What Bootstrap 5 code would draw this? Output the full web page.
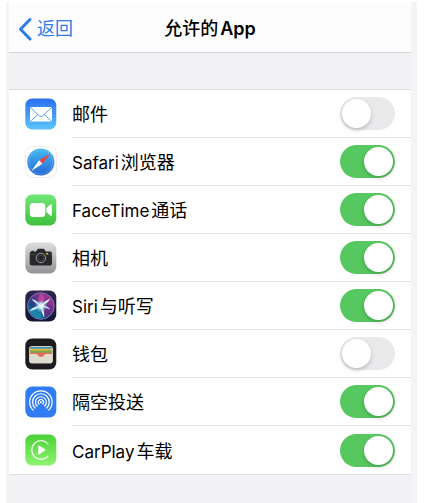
<!DOCTYPE html>
<html lang="zh-CN">
<head>
<meta charset="utf-8">
<meta name="viewport" content="width=device-width, initial-scale=1">
<title>允许的App</title>
<link href="https://cdn.jsdelivr.net/npm/bootstrap@5.3.0/dist/css/bootstrap.min.css" rel="stylesheet">
<style>
  body { font-family: Inter, "Noto Sans CJK SC", sans-serif; font-size: 18px; line-height: 24px; color: #000; background: #fff; }
  .page-wrap { padding: 2px 30px 0 6px; }
  .phone { background: #f2f1f6; border: solid #f4f4f4; border-width: 0 6px 0 3px; }
  .top-bar { display: grid; grid-template-columns: 1fr auto 1fr; height: 51px; padding: 4px 9px 0; background: #fdfdfe; border-bottom: 1px solid #d5d5d8; }
  .back-link { color: #2e7bee; }
  .page-title { font-size: 18px; line-height: 24px; font-weight: 600; }
  .page-title .han { font-weight: 500; margin-right: 2px; }
  .settings { margin-top: 36px; background: #fff; border: solid #dcdce1; border-width: 1px 0; }
  .setting { padding-left: 16px; gap: 15px; }
  .setting-body { min-height: 48px; padding-right: 16px; border-bottom: 1px solid #e2e2e4; }
  .setting-body label { padding-top: 3px; }
  .setting:last-child .setting-body { border-bottom: 0; }
  .app-icon { width: 32px; height: 32px; }
  .latin { font-size: 17px; margin-right: 2px; }
  .form-check-input.toggle { width: 55px; height: 33px; margin: 0; padding: 0 2px; border: 0; border-radius: 17px; background: #e9e9eb; display: flex; align-items: center; cursor: pointer; }
  .form-check-input.toggle::before { content: ""; width: 29px; height: 29px; border-radius: 50%; background: #fff; box-shadow: 0 2px 4px rgba(0,0,0,.2); }
  .form-check-input.toggle:checked { background: #57c75f; justify-content: flex-end; }
</style>
<script src="https://cdn.jsdelivr.net/npm/bootstrap@5.3.0/dist/js/bootstrap.bundle.min.js" defer></script>
</head>
<body>
<div class="page-wrap min-vh-100 d-flex flex-column">
<main class="phone flex-grow-1">
  <header class="top-bar align-items-center">
    <a class="back-link d-flex align-items-center text-decoration-none" href="#">
      <svg width="19" height="24" viewBox="0 0 19 24" fill="none" stroke="currentColor" stroke-width="3" stroke-linecap="round" stroke-linejoin="round" aria-hidden="true"><path d="M12 2.500 2.500 12.200 12 22"/></svg>
      <span>返回</span>
    </a>
    <h1 class="page-title m-0"><span class="han">允许的</span>App</h1>
  </header>

  <ul class="settings list-unstyled mb-0">
    <li class="setting d-flex align-items-center">
      <svg class="app-icon flex-shrink-0" viewBox="0 0 32 32" aria-hidden="true">
        <defs><linearGradient id="gMail" x2="0" y2="1"><stop stop-color="#2a6ff0"/><stop offset="1" stop-color="#5cc5fa"/></linearGradient></defs>
        <rect width="31" height="31" y=".5" x=".3" rx="7" fill="url(#gMail)"/>
        <rect x="5" y="9" width="22" height="14.500" rx="1.600" fill="#fff"/>
        <path d="M5.600 9.600l8.800 8.300q1.600 1.300 3.200 0l8.800-8.300M5.800 23l7-6.500M26.200 23l-7-6.500" fill="none" stroke="#5a9fe6" stroke-width="1"/>
      </svg>
      <div class="setting-body flex-grow-1 d-flex align-items-center justify-content-between">
        <label for="mail">邮件</label>
        <input class="form-check-input toggle" type="checkbox" role="switch" id="mail">
      </div>
    </li>
    <li class="setting d-flex align-items-center">
      <svg class="app-icon flex-shrink-0" viewBox="0 0 32 32" aria-hidden="true">
        <defs><linearGradient id="gSafari" x2="0" y2="1"><stop stop-color="#43bdf3"/><stop offset="1" stop-color="#2866d8"/></linearGradient></defs>
        <rect x=".5" y=".5" width="31" height="31" rx="7" fill="#fff" stroke="#ededed"/>
        <circle cx="15.800" cy="16" r="13.600" fill="url(#gSafari)"/>
        <circle cx="15.800" cy="16" r="11.800" fill="none" stroke="#a8dcf8" stroke-width="1" stroke-dasharray=".6 1.500"/>
        <path d="M25.500 7.500 14.200 14.200l3.200 3.600z" fill="#ee4440"/>
        <path d="M6.500 24.800 14.200 14.200l3.200 3.600z" fill="#fff"/>
      </svg>
      <div class="setting-body flex-grow-1 d-flex align-items-center justify-content-between">
        <label for="safari"><span class="latin">Safari</span>浏览器</label>
        <input class="form-check-input toggle" type="checkbox" role="switch" id="safari" checked>
      </div>
    </li>
    <li class="setting d-flex align-items-center">
      <svg class="app-icon flex-shrink-0" viewBox="0 0 32 32" aria-hidden="true">
        <defs><linearGradient id="gFace" x2="0" y2="1"><stop stop-color="#72e67a"/><stop offset="1" stop-color="#3fc13d"/></linearGradient></defs>
        <rect x=".3" y=".5" width="31" height="31" rx="7" fill="url(#gFace)"/>
        <rect x="4.800" y="9" width="15.500" height="14" rx="3.500" fill="#fff"/>
        <path d="M21.300 14.200 25.500 10.300q1.300-1 1.300.6v10.200q0 1.600-1.300.6l-4.200-3.900z" fill="#fff"/>
      </svg>
      <div class="setting-body flex-grow-1 d-flex align-items-center justify-content-between">
        <label for="facetime"><span class="latin">FaceTime</span>通话</label>
        <input class="form-check-input toggle" type="checkbox" role="switch" id="facetime" checked>
      </div>
    </li>
    <li class="setting d-flex align-items-center">
      <svg class="app-icon flex-shrink-0" viewBox="0 0 32 32" aria-hidden="true">
        <defs><linearGradient id="gCam" x2="0" y2="1"><stop stop-color="#dededf"/><stop offset="1" stop-color="#929296"/></linearGradient></defs>
        <rect x=".3" y=".5" width="31" height="31" rx="7" fill="url(#gCam)"/>
        <path d="M6.500 9.500V8.800h2.300v.7h1.700q.8 0 1.200-.9l.6-1.100q.4-.8 1.200-.8h4.800q.8 0 1.200.8l.6 1.100q.4.900 1.200.9h3.700q2 0 2 2v10q0 2-2 2H6.700q-2 0-2-2v-10q0-1.900 1.800-2z" fill="#29292b"/>
        <path d="M4.700 12.500h6M21 12.500h6" stroke="#505053" stroke-width=".7"/>
        <circle cx="15.900" cy="16" r="5.900" fill="#29292b"/>
        <circle cx="15.900" cy="16" r="4.700" fill="#222224" stroke="#bdbdc0" stroke-width=".8"/>
        <circle cx="15.900" cy="16" r="2.700" fill="none" stroke="#55555a" stroke-width=".7"/>
        <circle cx="22" cy="11.700" r=".9" fill="#f8c837"/>
      </svg>
      <div class="setting-body flex-grow-1 d-flex align-items-center justify-content-between">
        <label for="camera">相机</label>
        <input class="form-check-input toggle" type="checkbox" role="switch" id="camera" checked>
      </div>
    </li>
    <li class="setting d-flex align-items-center">
      <svg class="app-icon flex-shrink-0" viewBox="0 0 32 32" aria-hidden="true">
        <defs>
          <linearGradient id="gSiri" x2="0" y2="1"><stop stop-color="#30254f"/><stop offset="1" stop-color="#121638"/></linearGradient>
          <linearGradient id="gOrb" x1="1" y1="0" x2="0" y2="1"><stop stop-color="#b8338e"/><stop offset=".4" stop-color="#743192"/><stop offset=".65" stop-color="#1d4485"/><stop offset="1" stop-color="#1898b4"/></linearGradient>
          <radialGradient id="gGlow"><stop stop-color="#fff"/><stop offset=".4" stop-color="#d6f8fa" stop-opacity=".8"/><stop offset="1" stop-color="#6ac" stop-opacity="0"/></radialGradient>
        </defs>
        <rect x=".3" y=".5" width="31" height="31" rx="7" fill="url(#gSiri)"/>
        <circle cx="15.900" cy="16" r="13.300" fill="url(#gOrb)" stroke="#7b84ad" stroke-width=".9"/>
        <path d="M16 16Q10 8 16 3.500q7 4 0 12.500z" fill="#d04a9c" opacity=".7"/>
        <path d="M16 16Q15 22 18 28 9 29 5 21z" fill="#1fa3c0" opacity=".6"/>
        <path d="M16 16q10-1 12 1-1 7-7 9z" fill="#6a2a84" opacity=".8"/>
        <path d="M16 16Q12 10 7 9.500 10 13 16 16zm0 0q3-5 9-7-3 5-9 7zm0 0Q9 16 4.500 21 10 20 16 16zm0 0q0 6 3 11 1-6-3-11zm0 0q5 2 9 3-4-4-9-3z" fill="#e6fbfc" stroke="#b7eff3" stroke-width=".4"/>
        <circle cx="16" cy="16" r="6.500" fill="url(#gGlow)"/>
      </svg>
      <div class="setting-body flex-grow-1 d-flex align-items-center justify-content-between">
        <label for="siri"><span class="latin">Siri</span>与听写</label>
        <input class="form-check-input toggle" type="checkbox" role="switch" id="siri" checked>
      </div>
    </li>
    <li class="setting d-flex align-items-center">
      <svg class="app-icon flex-shrink-0" viewBox="0 0 32 32" aria-hidden="true">
        <defs><clipPath id="cCards"><rect x="4.600" y="8.500" width="22.800" height="16.500" rx="1.800"/></clipPath></defs>
        <rect x=".3" y=".5" width="31" height="31" rx="7" fill="#1c1c1e"/>
        <g clip-path="url(#cCards)">
          <path d="M4 8h24v4H4z" fill="#4396bd"/>
          <path d="M4 10.800h24v3H4z" fill="#e9b63d"/>
          <path d="M4 12.600h24v3H4z" fill="#76aa4d"/>
          <path d="M4 14.700h24v6H4z" fill="#e86b57"/>
          <path d="M4 16h7q1.200 0 1.700 1 1 2 3.300 2t3.300-2q.5-1 1.700-1h7V26H4z" fill="#dedbd0"/>
        </g>
        <rect x="4.600" y="8.500" width="22.800" height="16.500" rx="1.800" fill="none" stroke="#dedbd0" stroke-width=".9"/>
      </svg>
      <div class="setting-body flex-grow-1 d-flex align-items-center justify-content-between">
        <label for="wallet">钱包</label>
        <input class="form-check-input toggle" type="checkbox" role="switch" id="wallet">
      </div>
    </li>
    <li class="setting d-flex align-items-center">
      <svg class="app-icon flex-shrink-0" viewBox="0 0 32 32" aria-hidden="true">
        <rect x=".3" y=".5" width="31" height="31" rx="7" fill="#2f7cf3"/>
        <g fill="none" stroke="#fff" stroke-width="1.200" stroke-linecap="round">
          <path d="M8.100 24.100a11.200 11.200 0 1 1 15.600 0"/>
          <path d="M10.100 22a8.300 8.300 0 1 1 11.600 0"/>
          <path d="M12.100 20a5.400 5.400 0 1 1 7.600 0"/>
          <path d="M14 18a2.600 2.600 0 1 1 3.800 0"/>
        </g>
        <circle cx="15.900" cy="16.200" r="1" fill="#fff"/>
      </svg>
      <div class="setting-body flex-grow-1 d-flex align-items-center justify-content-between">
        <label for="airdrop">隔空投送</label>
        <input class="form-check-input toggle" type="checkbox" role="switch" id="airdrop" checked>
      </div>
    </li>
    <li class="setting d-flex align-items-center">
      <svg class="app-icon flex-shrink-0" viewBox="0 0 32 32" aria-hidden="true">
        <defs><linearGradient id="gCar" x2="0" y2="1"><stop stop-color="#4ad136"/><stop offset="1" stop-color="#8df471"/></linearGradient></defs>
        <rect x=".3" y=".5" width="31" height="31" rx="7" fill="url(#gCar)"/>
        <path d="M23 9.800A9.300 9.300 0 1 0 23 22.200" fill="none" stroke="#fff" stroke-width="1.200" stroke-linecap="round"/>
        <path d="M13.200 11.900q0-1 .9-.5l6 3.900q.9.600 0 1.200l-6 3.900q-.9.500-.9-.5z" fill="#fff"/>
      </svg>
      <div class="setting-body flex-grow-1 d-flex align-items-center justify-content-between">
        <label for="carplay"><span class="latin">CarPlay</span>车载</label>
        <input class="form-check-input toggle" type="checkbox" role="switch" id="carplay" checked>
      </div>
    </li>
  </ul>
</main>
</div>
</body>
</html>
